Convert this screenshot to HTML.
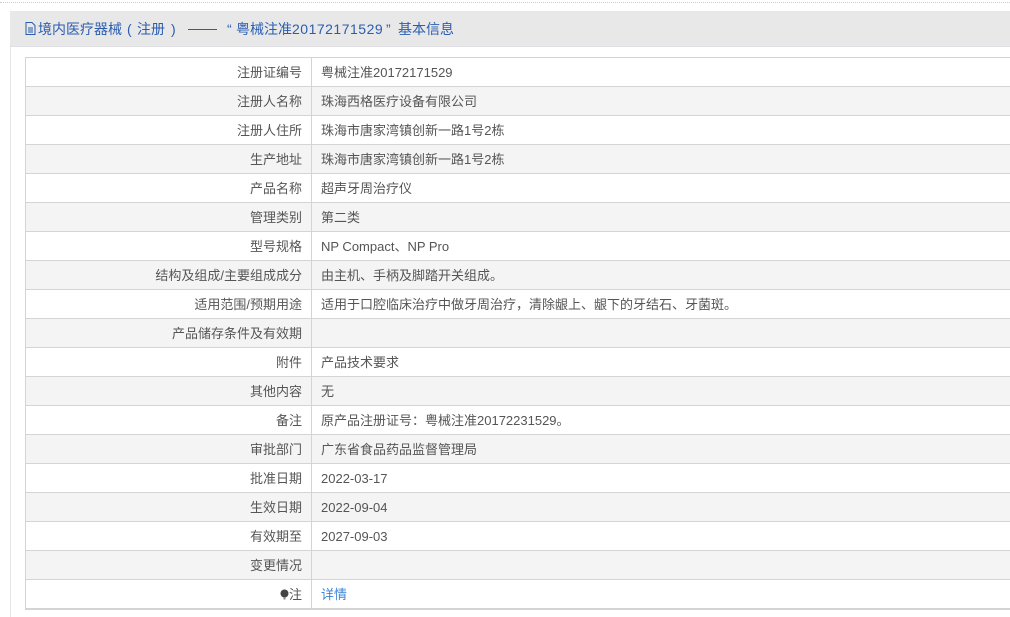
<!DOCTYPE html>
<html><head><meta charset="utf-8"><style>
body{margin:0;width:1010px;height:617px;overflow:hidden;background:#fff;font-family:"Liberation Sans","Noto Sans CJK SC",sans-serif;font-size:13px;color:#555;position:relative}
.dots{position:absolute;left:0;top:2px;width:1010px;border-top:1px dotted #ccc}
.side{position:absolute;left:10px;top:11px;bottom:0;border-left:1px solid #e6e6e6}
.hd{position:absolute;left:10px;top:11px;width:1000px;height:35px;background:#e8e8e8;border-bottom:1px solid #e0e0e4}
.t{position:absolute;top:19px;line-height:20px;color:#2a5db0;font-size:14px;font-family:"Liberation Sans","Noto Sans CJK SC",sans-serif;white-space:nowrap}
.dash{position:absolute;left:188px;top:29px;width:29px;height:1px;background:#2a5db0}
table{position:absolute;left:25px;top:57px;width:990px;border-collapse:collapse;border-bottom:2px solid #d4d4d4}
td{height:27px;border:1px solid #d4d4d4;padding:1px 9px 0;line-height:27px;white-space:nowrap}
td.l{width:267px;text-align:right}
tr:nth-child(even) td{background:#f4f4f4}
a{color:#3d84d6;text-decoration:none}
</style></head><body>
<div class="dots"></div><div class="side"></div>
<div class="hd"></div>
<svg style="position:absolute;left:25px;top:22px" width="11" height="13" viewBox="0 0 11 13"><path d="M1 .5h6l3 3v9H1z" fill="none" stroke="#2a5db0"/><path d="M3 6h5M3 8h5M3 10h5" stroke="#2a5db0"/></svg>
<span class="t" style="left:38px">境内医疗器械</span>
<span class="t" style="left:127px">(</span>
<span class="t" style="left:137px">注册</span>
<span class="t" style="left:171px">)</span>
<div class="dash"></div>
<span class="t" style="left:227px">“</span>
<span class="t" style="left:236px">粤械注准<span style="letter-spacing:0.5px">20172171529</span></span>
<span class="t" style="left:386px">”</span>
<span class="t" style="left:398px">基本信息</span>
<table>
<tr><td class="l">注册证编号</td><td>粤械注准20172171529</td></tr>
<tr><td class="l">注册人名称</td><td>珠海西格医疗设备有限公司</td></tr>
<tr><td class="l">注册人住所</td><td>珠海市唐家湾镇创新一路1号2栋</td></tr>
<tr><td class="l">生产地址</td><td>珠海市唐家湾镇创新一路1号2栋</td></tr>
<tr><td class="l">产品名称</td><td>超声牙周治疗仪</td></tr>
<tr><td class="l">管理类别</td><td>第二类</td></tr>
<tr><td class="l">型号规格</td><td>NP Compact、NP Pro</td></tr>
<tr><td class="l">结构及组成/主要组成成分</td><td>由主机、手柄及脚踏开关组成。</td></tr>
<tr><td class="l">适用范围/预期用途</td><td>适用于口腔临床治疗中做牙周治疗，清除龈上、龈下的牙结石、牙菌斑。</td></tr>
<tr><td class="l">产品储存条件及有效期</td><td></td></tr>
<tr><td class="l">附件</td><td>产品技术要求</td></tr>
<tr><td class="l">其他内容</td><td>无</td></tr>
<tr><td class="l">备注</td><td>原产品注册证号：粤械注准20172231529。</td></tr>
<tr><td class="l">审批部门</td><td>广东省食品药品监督管理局</td></tr>
<tr><td class="l">批准日期</td><td>2022-03-17</td></tr>
<tr><td class="l">生效日期</td><td>2022-09-04</td></tr>
<tr><td class="l">有效期至</td><td>2027-09-03</td></tr>
<tr><td class="l">变更情况</td><td></td></tr>
<tr><td class="l"><svg width="9" height="11" viewBox="0 0 9 11" style="vertical-align:-1px"><circle cx="4.5" cy="4.5" r="4" fill="#444"/><path d="M3.5 8h2v2.5h-2z" fill="#888"/></svg>注</td><td><a>详情</a></td></tr>
</table>
</body></html>
